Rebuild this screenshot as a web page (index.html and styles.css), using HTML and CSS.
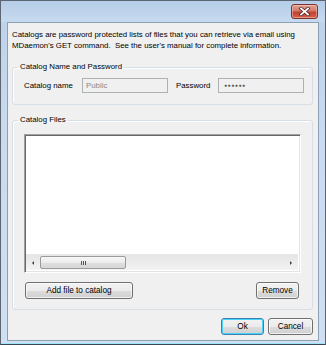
FILE: index.html
```html
<!DOCTYPE html>
<html lang="en">
<head>
  <meta charset="UTF-8" />
  <title>Catalog</title>
  <link rel="stylesheet" href="styles.css">
</head>
<body>
  <div class="window">
    <div class="titlebar">
      <button class="close" aria-label="Close">
        <svg width="11" height="9" viewBox="0 0 11 9">
          <path d="M2 1.5 L9 7.5 M9 1.5 L2 7.5" stroke="#4a2420" stroke-width="3.4" stroke-linecap="square"/>
          <path d="M2 1.5 L9 7.5 M9 1.5 L2 7.5" stroke="#fff" stroke-width="1.8" stroke-linecap="square"/>
        </svg>
      </button>
    </div>

    <div class="client">
      <p class="intro">Catalogs are password protected lists of files that you can retrieve via email using<br>MDaemon's GET command.&nbsp; See the user's manual for complete information.</p>

      <fieldset class="group group-name">
        <legend>Catalog Name and Password</legend>
        <div class="field-row">
          <label class="field-label">Catalog name</label>
          <div class="textbox">Public</div>
          <label class="field-label pass-label">Password</label>
          <div class="textbox textbox-pass">●●●●●●</div>
        </div>
      </fieldset>

      <fieldset class="group group-files">
        <legend>Catalog Files</legend>
        <div class="listbox">
          <div class="list-area"></div>
          <div class="hscroll">
            <span class="arrow arrow-left"></span>
            <div class="track">
              <div class="thumb"><span class="grip"></span></div>
            </div>
            <span class="arrow arrow-right"></span>
          </div>
        </div>
        <div class="file-actions">
          <button class="btn btn-add">Add file to catalog</button>
          <button class="btn btn-remove">Remove</button>
        </div>
      </fieldset>

      <div class="dialog-actions">
        <button class="btn btn-ok">Ok</button>
        <button class="btn btn-cancel">Cancel</button>
      </div>
    </div>
  </div>
</body>
</html>
```

FILE: styles.css
```css
body {
  margin: 0;
  font-family: 'Liberation Sans', Arial, sans-serif;
  font-size: 7.85px;
  color: #000;
  background: #fff;
}

.window {
  box-sizing: border-box;
  width: 326px;
  height: 345px;
  border: 1px solid #5d6670;
  border-bottom-color: #3a4654;
  padding: 0 6px 3px 6px;
  background: linear-gradient(#bcd2ea, #c9dbef 40%, #cfe0f2);
  display: flex;
  flex-direction: column;
  box-shadow: inset 0 -1px 0 #9fe3f7;
}

.titlebar {
  height: 21px;
  display: flex;
  justify-content: flex-end;
  align-items: flex-start;
  background: linear-gradient(#b5cde8, #c7daef);
  margin: 0 -6px;
  padding: 0 7px 0 0;
}

.close {
  width: 27px;
  height: 15px;
  margin-top: 3px;
  padding: 0;
  border: 1px solid #7b342b;
  border-radius: 3px;
  background: linear-gradient(#e2a195, #d27a68 45%, #c2412f 55%, #d5614d);
  box-shadow: inset 0 0 0 1px rgba(255, 220, 210, 0.45);
  display: flex;
  align-items: center;
  justify-content: center;
}

.client {
  flex: 1;
  border: 1px solid #8d9fb4;
  background: #f0f0f0;
  padding: 6px 5px 0 4px;
  display: flex;
  flex-direction: column;
}

.intro {
  margin: 0 0 11px 0;
  line-height: 11px;
}

.group {
  margin: 0;
  padding: 0;
  border: 1px solid #d5dfe5;
  border-radius: 3px;
  box-shadow: inset 1px 1px 0 #fff;
  min-width: 0;
}

.group legend {
  margin-left: -6px;
  padding: 0 2px;
  line-height: 10px;
}

.group-name {
  padding: 6px 8px 11px 11px;
}

.field-row {
  display: flex;
  align-items: center;
}

.field-label {
  width: 58px;
}

.pass-label {
  width: 42px;
  margin-left: 8px;
}

.textbox {
  box-sizing: border-box;
  width: 86px;
  height: 15px;
  border: 1px solid #adb2b5;
  background: #f0f0f0;
  color: #8a8a8a;
  padding: 0 0 0 3px;
  line-height: 13px;
}

.textbox-pass {
  color: #555;
  font-size: 5px;
  letter-spacing: 0.6px;
  padding-left: 5px;
}

.group-files {
  margin-top: 10px;
  padding: 9px 11px 10px 11px;
}

.listbox {
  box-sizing: border-box;
  height: 139px;
  border: 1px solid;
  border-color: #a0a0a0 #fff #fff #a0a0a0;
  box-shadow: inset 1px 1px 0 #696969, inset -1px -1px 0 #e3e3e3;
  background: #fff;
  padding: 1px 2px 2px 1px;
  display: flex;
  flex-direction: column;
}

.list-area {
  flex: 1;
}

.hscroll {
  height: 15px;
  display: flex;
  align-items: center;
  background: linear-gradient(#e5e5e5, #f3f3f3);
  border-top: 1px solid #e8e8e8;
}

.arrow {
  width: 0;
  height: 0;
  border-top: 2px solid transparent;
  border-bottom: 2px solid transparent;
  margin: 0 6px;
}

.arrow-left {
  border-right: 2px solid #404040;
}

.arrow-right {
  border-left: 2px solid #404040;
}

.track {
  flex: 1;
  height: 100%;
  display: flex;
  align-items: center;
}

.thumb {
  box-sizing: border-box;
  width: 86px;
  height: 13px;
  border: 1px solid #9b9b9b;
  border-radius: 2px;
  background: linear-gradient(#f6f6f6, #ececec 50%, #dfdfdf 51%, #d6d6d6);
  display: flex;
  align-items: center;
  justify-content: center;
}

/* three little grip bars in the middle of the thumb */
.grip {
  width: 5px;
  height: 4px;
  background: repeating-linear-gradient(90deg, #555 0 1px, transparent 1px 2px);
}

.file-actions {
  display: flex;
  justify-content: space-between;
  margin-top: 9px;
  padding: 0 2px 0 1px;
}

.btn {
  box-sizing: border-box;
  height: 17px;
  padding: 0;
  font: inherit;
  font-size: 8.2px;
  color: #000;
  border: 1px solid #707070;
  border-radius: 3px;
  background: linear-gradient(#f2f2f2, #ebebeb 50%, #dddddd 51%, #cfcfcf);
  box-shadow: inset 0 0 0 1px rgba(255, 255, 255, 0.7);
}

.btn-add {
  width: 108px;
}

.btn-remove {
  width: 43px;
}

.dialog-actions {
  display: flex;
  justify-content: flex-end;
  gap: 4px;
  margin-top: 8px;
}

.btn-ok {
  width: 43px;
  border-color: #3c7fb1;
  box-shadow: inset 0 0 0 1px #48d3fb;
}

.btn-cancel {
  width: 45px;
}
```
